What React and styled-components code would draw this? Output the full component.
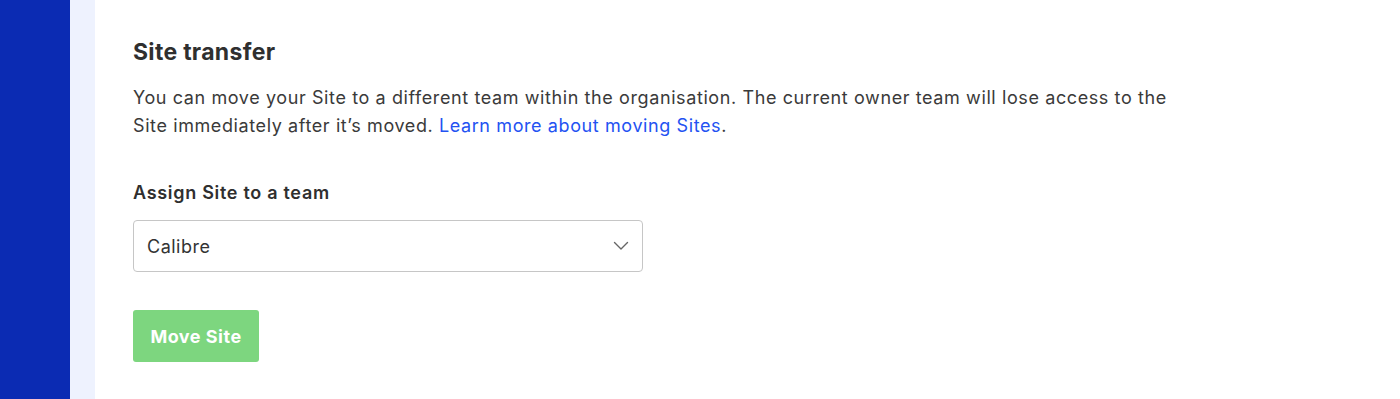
import React from "react";
import { styled, createGlobalStyle } from "styled-components";

const GlobalStyle = createGlobalStyle`
  html, body {
    margin: 0;
    padding: 0;
    background: #ffffff;
    font-family: Inter, "Noto Sans", "Liberation Sans", sans-serif;
    color: #333333;
  }
`;

function ChevronDown() {
  return (
    <svg width="18" height="18" viewBox="0 0 18 18" fill="none">
      <path d="M2.5 5.5l6.5 6.5 6.5-6.5" stroke="#666" strokeWidth="1.4" strokeLinecap="round" strokeLinejoin="round" />
    </svg>
  );
}

function App() {
  return (
    <>
      <GlobalStyle />
      <StPage>
        <StSidebar />
        <StRail />
        <StContent>
          <StTitle>Site transfer</StTitle>
          <StText>
            You can move your Site to a different team within the organisation. The current owner team will lose
            access to the Site immediately after it’s moved. <StLink href="#">Learn more about moving Sites</StLink>.
          </StText>
          <StLabel htmlFor="team">Assign Site to a team</StLabel>
          <StSelect id="team">
            <span>Calibre</span>
            <ChevronDown />
          </StSelect>
          <StButton disabled>Move Site</StButton>
        </StContent>
      </StPage>
    </>
  );
}

export default App;

const StPage = styled.div`
  display: flex;
  width: 100%;
  height: 399px;
  overflow: hidden;
`;

const StSidebar = styled.div`
  width: 70px;
  flex-shrink: 0;
  background: #0b2bb3;
`;

const StRail = styled.div`
  width: 25px;
  flex-shrink: 0;
  background: #eef2fe;
`;

const StContent = styled.div`
  flex: 1;
  display: flex;
  flex-direction: column;
  align-items: flex-start;
  padding: 37px 38px 0;
`;

const StTitle = styled.h2`
  margin: 0;
  font-size: 23px;
  font-weight: 700;
  line-height: 30px;
  letter-spacing: 0.3px;
  color: #2f2f2f;
`;

const StText = styled.p`
  margin: 17px 0 0;
  max-width: 1050px;
  font-size: 18px;
  line-height: 28px;
  letter-spacing: 0.6px;
  color: #3a3a3a;
`;

const StLink = styled.a`
  color: #2352f2;
  text-decoration: none;
`;

const StLabel = styled.label`
  margin-top: 40px;
  font-size: 18px;
  font-weight: 600;
  line-height: 26px;
  letter-spacing: 0.7px;
  color: #2f2f2f;
`;

const StSelect = styled.div`
  box-sizing: border-box;
  margin-top: 14px;
  width: 510px;
  height: 52px;
  display: flex;
  align-items: center;
  justify-content: space-between;
  padding: 0 12px 0 13px;
  border: 1px solid #c6c6c6;
  border-radius: 4px;
  font-size: 18px;
  letter-spacing: 0.5px;
  color: #333;
`;

const StButton = styled.button`
  margin-top: 38px;
  width: 126px;
  height: 52px;
  padding: 0;
  border: none;
  border-radius: 3px;
  background: #7dd67f;
  color: #ffffff;
  font-family: inherit;
  font-size: 18px;
  font-weight: 700;
  letter-spacing: 0.5px;
`;
